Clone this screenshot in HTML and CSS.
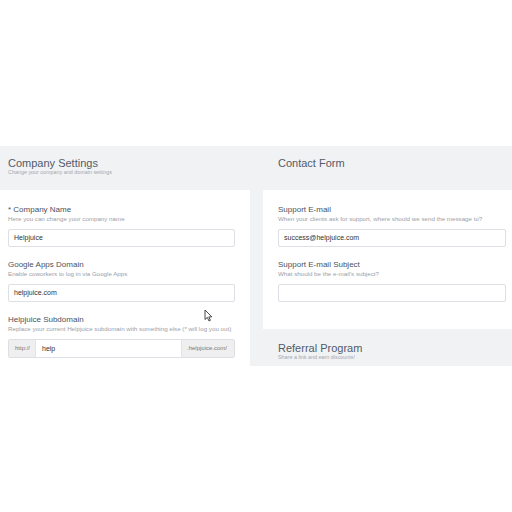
FILE: index.html
```html
<!DOCTYPE html>
<html>
<head>
<meta charset="utf-8">
<link rel="stylesheet" href="styles.css">
</head>
<body>
<div class="top-space"></div>
<div class="band">
  <div class="col">
    <div class="head">
      <h2 class="title">Company Settings</h2>
      <p class="sub">Change your company and domain settings</p>
    </div>
    <div class="card card-left">
      <div class="field">
        <div class="label">* Company Name</div>
        <div class="help">Here you can change your company name</div>
        <div class="input">Helpjuice</div>
      </div>
      <div class="field">
        <div class="label">Google Apps Domain</div>
        <div class="help">Enable coworkers to log in via Google Apps</div>
        <div class="input">helpjuice.com</div>
      </div>
      <div class="field">
        <div class="label">Helpjuice Subdomain</div>
        <div class="help">Replace your current Helpjuice subdomain with something else (* will log you out)</div>
        <div class="group">
          <span class="addon addon-l">http://</span>
          <span class="group-input">help</span>
          <span class="addon addon-r">.helpjuice.com/</span>
        </div>
      </div>
      <svg class="cursor" width="9" height="13" viewBox="0 0 9 13"><path d="M1 1 L1 10.5 L3.3 8.4 L5 12 L6.4 11.3 L4.8 7.9 L7.8 7.9 Z" fill="#fff" stroke="#333" stroke-width="0.9" stroke-linejoin="round"/></svg>
    </div>
  </div>
  <div class="col">
    <div class="head head-right">
      <h2 class="title">Contact Form</h2>
    </div>
    <div class="card card-right">
      <div class="field">
        <div class="label">Support E-mail</div>
        <div class="help">When your clients ask for support, where should we send the message to?</div>
        <div class="input">success@helpjuice.com</div>
      </div>
      <div class="field">
        <div class="label">Support E-mail Subject</div>
        <div class="help">What should be the e-mail's subject?</div>
        <div class="input"></div>
      </div>
    </div>
    <div class="head head-right head-ref">
      <h2 class="title">Referral Program</h2>
      <p class="sub">Share a link and earn discounts!</p>
    </div>
  </div>
</div>
</body>
</html>
```
FILE: styles.css
```css
* { box-sizing: border-box; }
html, body { margin: 0; padding: 0; background: #fff; }
body {
  font-family: "Liberation Sans", Arial, sans-serif;
  width: 512px;
  height: 512px;
  overflow: hidden;
}
.top-space { height: 146px; }
.band {
  height: 220px;
  background: #f1f2f4;
  overflow: hidden;
  display: grid;
  grid-template-columns: 250px 1fr;
  column-gap: 13px;
  align-items: start;
}
.col { display: flex; flex-direction: column; }
.head {
  height: 44px;
  padding: 11px 8px 0 8px;
}
.head-right { padding-left: 15px; }
.head-ref { padding-top: 13px; }
.title {
  margin: 0;
  font-size: 11px;
  line-height: 12px;
  font-weight: normal;
  color: #515b68;
}
.sub {
  margin: 0;
  font-size: 5.4px;
  line-height: 6px;
  color: #a3a8b0;
}
.card {
  background: #fff;
  padding: 15px 15px 14px 8px;
  position: relative;
}
.card-right { padding: 15px 6px 14px 15px; }
.field { margin-bottom: 13px; }
.label {
  font-size: 8px;
  line-height: 10px;
  color: #4a525e;
}
.help {
  font-size: 6.2px;
  line-height: 8px;
  color: #9aa0a8;
  white-space: nowrap;
  margin-bottom: 6px;
}
.input {
  height: 18px;
  border: 1px solid #dcdfe3;
  border-radius: 2px;
  font-size: 7px;
  line-height: 16px;
  padding-left: 5px;
  color: #333;
}
.group {
  display: flex;
  height: 19px;
  border: 1px solid #dcdfe3;
  border-radius: 2px;
  font-size: 7px;
  line-height: 17px;
  overflow: hidden;
}
.addon {
  background: #efefef;
  color: #777;
  font-size: 6px;
}
.addon-l { width: 27px; padding-left: 6px; border-right: 1px solid #e2e4e7; }
.addon-r { width: 53px; padding-left: 5px; border-left: 1px solid #e2e4e7; }
.group-input { flex: 1; padding-left: 6px; color: #333; }
.cursor { position: absolute; left: 204px; top: 119px; }
```
